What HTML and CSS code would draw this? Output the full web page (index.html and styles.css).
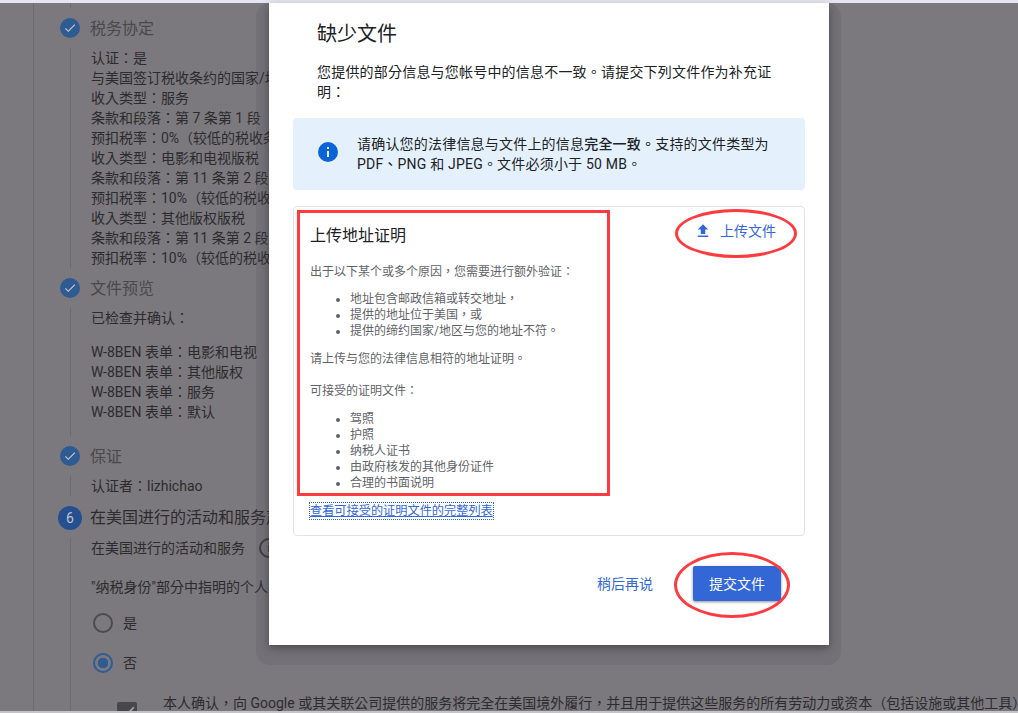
FILE: index.html
```html
<!DOCTYPE html>
<html lang="zh-TW">
<head>
    <meta charset="UTF-8">
    <meta name="viewport" content="width=device-width, initial-scale=1.0">
    <title>缺少文件</title>
    <link rel="stylesheet" href="styles.css">
</head>
<body>
    <div class="top-strip"></div>

    <!-- Dimmed tax form behind the dialog -->
    <main class="form-page">
        <div class="rail-stub"></div>

        <section class="step">
            <div class="step-head">
                <span class="step-done"><svg viewBox="0 0 24 24"><path d="M9 16.2 4.8 12l-1.4 1.4L9 19 21 7l-1.4-1.4z"/></svg></span>
                <h2 class="step-title">税务协定</h2>
            </div>
            <div class="step-body">
                <div>认证：是</div>
                <div>与美国签订税收条约的国家/地区：中国</div>
                <div>收入类型：服务</div>
                <div>条款和段落：第 7 条第 1 段</div>
                <div>预扣税率：0%（较低的税收条约税率）</div>
                <div>收入类型：电影和电视版税</div>
                <div>条款和段落：第 11 条第 2 段</div>
                <div>预扣税率：10%（较低的税收条约税率）</div>
                <div>收入类型：其他版权版税</div>
                <div>条款和段落：第 11 条第 2 段</div>
                <div>预扣税率：10%（较低的税收条约税率）</div>
            </div>
        </section>

        <section class="step">
            <div class="step-head">
                <span class="step-done"><svg viewBox="0 0 24 24"><path d="M9 16.2 4.8 12l-1.4 1.4L9 19 21 7l-1.4-1.4z"/></svg></span>
                <h2 class="step-title">文件预览</h2>
            </div>
            <div class="step-body step-body-files">
                <div class="files-intro">已检查并确认：</div>
                <div>W-8BEN 表单：电影和电视</div>
                <div>W-8BEN 表单：其他版权</div>
                <div>W-8BEN 表单：服务</div>
                <div>W-8BEN 表单：默认</div>
            </div>
        </section>

        <section class="step">
            <div class="step-head">
                <span class="step-done"><svg viewBox="0 0 24 24"><path d="M9 16.2 4.8 12l-1.4 1.4L9 19 21 7l-1.4-1.4z"/></svg></span>
                <h2 class="step-title">保证</h2>
            </div>
            <div class="step-body">
                <div>认证者：lizhichao</div>
            </div>
        </section>

        <section class="step step-current">
            <div class="step-head">
                <span class="step-number">6</span>
                <h2 class="step-title">在美国进行的活动和服务声明</h2>
            </div>
            <div class="step-body">
                <div class="activity-label">在美国进行的活动和服务 <span class="help-dot">i</span></div>
                <div class="activity-question">"纳税身份"部分中指明的个人或实体是否在美国进行活动</div>
                <label class="radio-row"><span class="radio"></span>是</label>
                <label class="radio-row"><span class="radio radio-on"></span>否</label>
                <div class="confirm-row">
                    <span class="checkbox"><svg viewBox="0 0 24 24"><path d="M9 16.2 4.8 12l-1.4 1.4L9 19 21 7l-1.4-1.4z"/></svg></span>
                    <span>本人确认，向 Google 或其关联公司提供的服务将完全在美国境外履行，并且用于提供这些服务的所有劳动力或资本（包括设施或其他工具）</span>
                </div>
            </div>
        </section>
    </main>

    <div class="bottom-strip"></div>

    <!-- Dialog -->
    <div class="dialog-band"></div>
    <div class="dialog">
        <h1 class="dialog-title">缺少文件</h1>
        <p class="dialog-text">您提供的部分信息与您帐号中的信息不一致。请提交下列文件作为补充证明：</p>

        <div class="notice">
            <svg class="notice-icon" viewBox="2 2 20 20"><path d="M12 2a10 10 0 1 0 0 20 10 10 0 0 0 0-20zm1 15h-2v-6h2v6zm0-8h-2V7h2v2z"/></svg>
            <div>请确认您的法律信息与文件上的信息<b>完全一致。</b>支持的文件类型为 PDF、PNG 和 JPEG。文件必须小于 50 MB。</div>
        </div>

        <div class="upload-card">
            <div class="upload-info">
                <h3 class="upload-title">上传地址证明</h3>
                <p class="upload-para">出于以下某个或多个原因，您需要进行额外验证：</p>
                <ul class="upload-list">
                    <li>地址包含邮政信箱或转交地址，</li>
                    <li>提供的地址位于美国，或</li>
                    <li>提供的缔约国家/地区与您的地址不符。</li>
                </ul>
                <p class="upload-para">请上传与您的法律信息相符的地址证明。</p>
                <p class="upload-para upload-para-gap">可接受的证明文件：</p>
                <ul class="upload-list upload-list-docs">
                    <li>驾照</li>
                    <li>护照</li>
                    <li>纳税人证书</li>
                    <li>由政府核发的其他身份证件</li>
                    <li>合理的书面说明</li>
                </ul>
                <a class="upload-link" href="#">查看可接受的证明文件的完整列表</a>
            </div>
            <button class="upload-button">
                <svg viewBox="0 0 24 24"><path d="M9 16h6v-6h4l-7-7-7 7h4zm-4 2h14v2H5z"/></svg>
                上传文件
            </button>
        </div>

        <div class="dialog-actions">
            <a class="later-link" href="#">稍后再说</a>
            <button class="submit-button">提交文件</button>
        </div>

        <!-- Red marks drawn on the screenshot -->
        <div class="mark-box"></div>
        <div class="mark-ring mark-ring-upload"></div>
        <div class="mark-ring mark-ring-submit"></div>
    </div>
</body>
</html>
```

FILE: styles.css
```css
* {
    box-sizing: border-box;
}

html, body {
    height: 100%;
}

body {
    margin: 0;
    overflow: hidden;
    display: flex;
    flex-direction: column;
    background: #7b797d;
    color: #2c2b2d;
    font-family: Roboto, "Noto Sans CJK TC", sans-serif;
    font-size: 14px;
    line-height: 20px;
}

.top-strip {
    height: 3px;
    background: #e6e6f0;
    flex: none;
}

.bottom-strip {
    height: 2px;
    background: #c4c4c8;
    flex: none;
}

/* background form */
.form-page {
    flex: 1;
    min-height: 0;
    overflow: hidden;
    margin-left: 33px;
    padding-left: 26px;
    border-left: 1px solid #6c6b6e;
    white-space: nowrap;
}

.rail-stub {
    width: 1px;
    height: 5px;
    margin: 0 0 10px 10px;
    background: #6c6b6e;
}

.step {
    margin-bottom: 10px;
}

.step-head {
    display: flex;
    align-items: center;
    gap: 10px;
}

.step-title {
    margin: 2px 0 0;
    font-size: 16px;
    font-weight: 400;
    line-height: 18px;
    color: #49484b;
}

.step-done {
    width: 20px;
    height: 20px;
    border-radius: 50%;
    background: #2f5b93;
    display: flex;
    align-items: center;
    justify-content: center;
}

.step-done svg {
    width: 14px;
    height: 14px;
    fill: #c9c9cc;
}

.step-body {
    margin: 10px 0 0 10px;
    padding-left: 20px;
    border-left: 1px solid #6c6b6e;
}

.step-body-files {
    padding-bottom: 14px;
}

.files-intro {
    margin-bottom: 14px;
}

.step-current .step-head {
    margin-left: -2px;
    gap: 8px;
}

.step-current .step-title {
    margin-top: 0;
    color: #2c2b2d;
}

.step-current .step-body {
    margin-top: 8px;
}

.step-number {
    width: 24px;
    height: 24px;
    border-radius: 50%;
    background: #254f90;
    color: #c4c4c8;
    font-size: 14px;
    display: flex;
    align-items: center;
    justify-content: center;
}

.activity-label {
    margin-top: 2px;
    display: flex;
    align-items: center;
    gap: 14px;
}

.help-dot {
    width: 20px;
    height: 20px;
    border: 2px solid #3e3d40;
    border-radius: 50%;
    font-size: 12px;
    line-height: 16px;
    text-align: center;
}

.activity-question {
    margin-top: 19px;
}

.radio-row {
    display: flex;
    align-items: center;
    gap: 10px;
    margin: 16px 0 0 2px;
}

.radio-row + .radio-row {
    margin-top: 20px;
}

.radio {
    width: 20px;
    height: 20px;
    border: 2px solid #4b4a4d;
    border-radius: 50%;
}

.radio-on {
    border-color: #2f5b93;
    background: radial-gradient(circle, #2f5b93 0 5px, transparent 5.5px);
}

.confirm-row {
    display: flex;
    gap: 26px;
    margin: 20px 0 0 26px;
}

.checkbox {
    width: 20px;
    height: 20px;
    margin-top: 9px;
    border-radius: 2px;
    background: #47464a;
    flex: none;
    display: flex;
}

.checkbox svg {
    fill: #a9a8ab;
}

/* dialog */
.dialog-band {
    position: absolute;
    left: 256px;
    top: 3px;
    width: 585px;
    height: 662px;
    border-radius: 14px;
    background: rgba(70, 74, 84, 0.14);
}

.dialog {
    position: absolute;
    left: 269px;
    top: 3px;
    width: 560px;
    height: 642px;
    padding: 17px 24px 0;
    background: #fff;
    color: #202124;
    box-shadow: 0 3px 8px rgba(0, 0, 0, 0.35);
}

.dialog-title {
    margin: 0 0 14px 24px;
    font-size: 20px;
    font-weight: 400;
    line-height: 28px;
}

.dialog-text {
    margin: 0 24px 16px;
    letter-spacing: 0.2px;
}

.notice {
    display: flex;
    gap: 19px;
    padding: 16px 24px 16px 25px;
    background: #e4f1fd;
    border-radius: 4px;
    letter-spacing: 0.2px;
}

.notice-icon {
    width: 20px;
    height: 20px;
    margin-top: 8px;
    fill: #0b63d6;
    flex: none;
}

.notice b {
    font-weight: 500;
}

.upload-card {
    display: flex;
    justify-content: space-between;
    align-items: flex-start;
    margin-top: 16px;
    padding: 6px 28px 15px 16px;
    border: 1px solid #e3e3e6;
    border-radius: 4px;
}

.upload-info {
    padding-top: 11px;
}

.upload-title {
    margin: 0;
    font-size: 16px;
    font-weight: 400;
    line-height: 24px;
}

.upload-para {
    margin: 16px 0 0;
    font-size: 12px;
    line-height: 16px;
    color: #5f6368;
}

.upload-list + .upload-para {
    margin-top: 12px;
}

.upload-para + .upload-para-gap {
    margin-top: 16px;
}

.upload-list {
    margin: 11px 0 0;
    padding-left: 40px;
    font-size: 12px;
    line-height: 16px;
    color: #5f6368;
}

.upload-list-docs {
    margin-top: 12px;
}

.upload-link {
    display: inline-block;
    margin-top: 12px;
    font-size: 12.2px;
    line-height: 16px;
    color: #3367d6;
    outline: 1px dotted #3367d6;
}

.upload-button {
    display: flex;
    align-items: center;
    gap: 8px;
    height: 36px;
    padding: 0;
    border: 0;
    background: none;
    color: #3367d6;
    font: inherit;
}

.upload-button svg {
    width: 18px;
    height: 18px;
    fill: #3367d6;
}

.dialog-actions {
    display: flex;
    align-items: center;
    justify-content: flex-end;
    gap: 40px;
    margin: 30px 24px 0 0;
}

.later-link {
    color: #3367d6;
    text-decoration: none;
}

.submit-button {
    width: 88px;
    height: 35px;
    padding: 0;
    border: 0;
    border-radius: 2px;
    background: #3367d6;
    color: #fff;
    font: inherit;
    box-shadow: 0 1px 3px rgba(0, 0, 0, 0.45);
}

/* annotations */
.mark-box {
    position: absolute;
    left: 28px;
    top: 207px;
    width: 313px;
    height: 286px;
    border: 3px solid #ff3b3f;
}

.mark-ring {
    position: absolute;
    border: 3px solid #ff3b3f;
    border-radius: 50%;
}

.mark-ring-upload {
    left: 406px;
    top: 206px;
    width: 122px;
    height: 49px;
}

.mark-ring-submit {
    left: 405px;
    top: 549px;
    width: 116px;
    height: 66px;
}
```
